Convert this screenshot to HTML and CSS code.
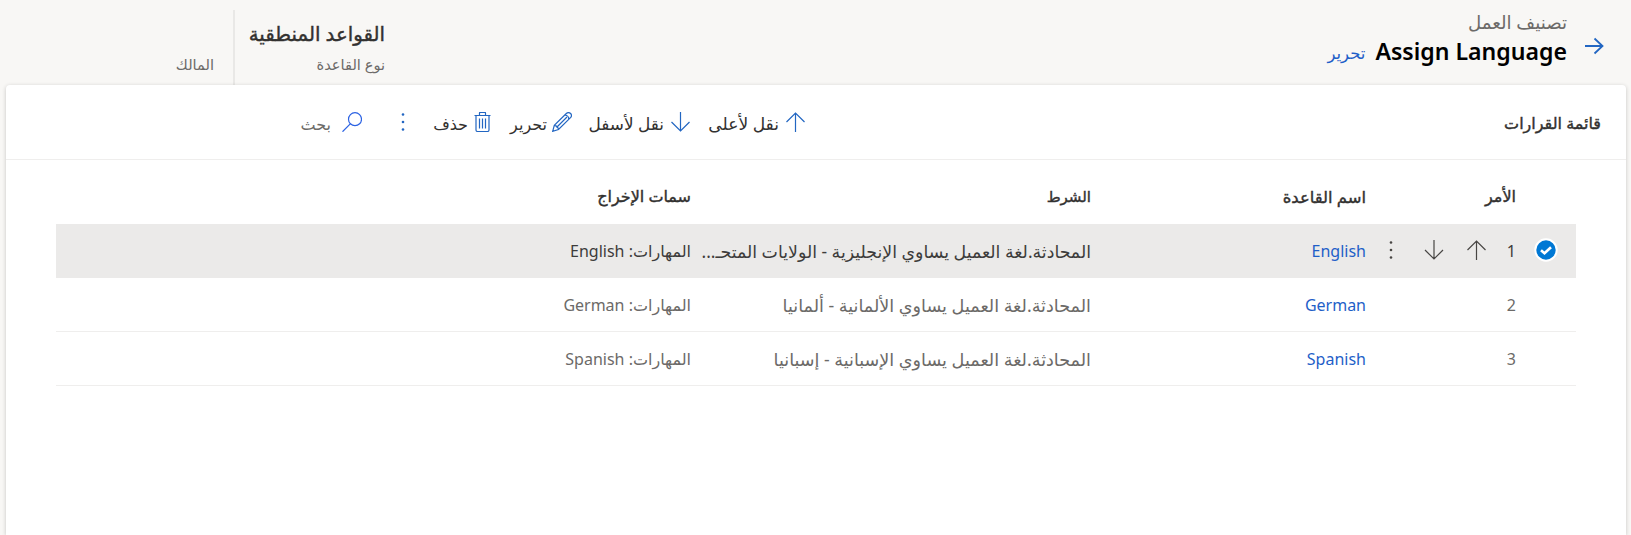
FILE: index.html
```
<!DOCTYPE html>
<html lang="ar" dir="rtl">
<head>
<meta charset="utf-8">
<title>Assign Language</title>
<link rel="stylesheet" href="styles.css">
</head>
<body>
<header class="top">
  <svg class="back" width="20" height="20" viewBox="0 0 20 20"><path d="M1 10H18.5M10.5 2.5L18.5 10L10.5 17.5"/></svg>
  <div class="heading">
    <div class="crumb">تصنيف العمل</div>
    <div class="title-row"><h1 class="title">Assign Language</h1><a class="edit">تحرير</a></div>
  </div>
  <div class="stats">
    <div class="stat rule"><span class="value">القواعد المنطقية</span><span class="label">نوع القاعدة</span></div>
    <div class="stat owner"><span class="value"></span><span class="label">المالك</span></div>
  </div>
</header>
<main class="card">
  <div class="toolbar">
    <h2 class="list-title">قائمة القرارات</h2>
    <div class="commands">
      <div class="cmd up"><svg width="20" height="20" viewBox="0 0 20 20"><path d="M10.5 20V1M1.5 10L10.5 1L19.5 10"/></svg><span>نقل لأعلى</span></div>
      <div class="cmd down"><svg width="20" height="20" viewBox="0 0 20 20"><path d="M10.5 0V19M1.5 10L10.5 19L19.5 10"/></svg><span>نقل لأسفل</span></div>
      <div class="cmd pen"><svg width="20" height="20" viewBox="0 0 20 20"><path d="M.7 19.3L2.3 13.3L14.3 1.5Q16.5-.3 18.6 1.5Q20.4 3.5 18.5 5.7L6.5 17.5ZM2.3 13.3Q6 14 6.5 17.5M13 3Q16.5 3.5 17 7M4.500 15.500L15 5"/></svg><span>تحرير</span></div>
      <div class="cmd bin"><svg width="17" height="20" viewBox="0 0 17 20"><path d="M.5 3.5H16.5M5.5 3.5V1Q5.5.5 6 .5H11Q11.5.5 11.5 1V3.5M2 3.5V18Q2 19.500 3.500 19.500H13.500Q15 19.500 15 18V3.500M5.500 6.500V16.500M8.500 6.500V16.500M11.500 6.500V16.500"/></svg><span>حذف</span></div>
      <svg class="dots" width="4" height="20" viewBox="0 0 4 20"><circle cx="2" cy="2.500" r="1.300"/><circle cx="2" cy="10" r="1.300"/><circle cx="2" cy="17.500" r="1.300"/></svg>
      <div class="cmd find"><svg width="20" height="20" viewBox="0 0 20 20"><circle cx="13" cy="7.200" r="6.500"/><path d="M8.500 11.700L.5 19.700"/></svg><span>بحث</span></div>
    </div>
  </div>
  <div class="table">
    <div class="row head">
      <div></div><div>الأمر</div><div class="name-head">اسم القاعدة</div><div class="cond-head">الشرط</div><div>سمات الإخراج</div>
    </div>
    <div class="row selected">
      <div class="check"><svg width="24" height="24" viewBox="0 0 24 24"><circle cx="12" cy="12" r="10.700"/><path d="M7 12.200L10.500 15.300L17 9.200"/></svg></div>
      <div class="order"><span>1</span>
        <svg class="move-up" width="20" height="20" viewBox="0 0 20 20"><path d="M10.500 20V1M1.500 10L10.500 1L19.500 10"/></svg>
        <svg class="move-down" width="20" height="20" viewBox="0 0 20 20"><path d="M10 0V19M1 10L10 19L19 10"/></svg>
        <svg class="dots" width="4" height="20" viewBox="0 0 4 20"><circle cx="2" cy="2.500" r="1.300"/><circle cx="2" cy="10" r="1.300"/><circle cx="2" cy="17.500" r="1.300"/></svg>
      </div>
      <a>English</a>
      <div class="cond">المحادثة.لغة العميل يساوي الإنجليزية - الولايات المتحـ...</div>
      <div>المهارات: English</div>
    </div>
    <div class="row">
      <div></div><div>2</div><a>German</a>
      <div class="cond">المحادثة.لغة العميل يساوي الألمانية - ألمانيا</div>
      <div>المهارات: German</div>
    </div>
    <div class="row">
      <div></div><div>3</div><a>Spanish</a>
      <div class="cond">المحادثة.لغة العميل يساوي الإسبانية - إسبانيا</div>
      <div>المهارات: Spanish</div>
    </div>
  </div>
</main>
</body>
</html>
```
FILE: styles.css
```
* { box-sizing: border-box; }
body {
  margin: 0;
  height: 535px;
  overflow: hidden;
  display: flex;
  flex-direction: column;
  background: #f8f7f5;
  color: #323130;
  font: 16px/24px "Noto Sans", "DejaVu Sans", sans-serif;
  white-space: nowrap;
}
svg { flex: none; display: block; fill: none; stroke: #2266c2; stroke-width: 1.2; }
a { color: #1f5fc8; }

.top { height: 85px; flex: none; display: flex; padding: 10px 27px 0 176px; }
.back { margin-top: 26px; stroke-width: 1.8; }
.heading { padding-right: 17px; }
.crumb { height: 25px; font-size: 18.2px; line-height: 25px; color: #6c6a68; }
.title-row { display: flex; align-items: center; gap: 10px; height: 32px; }
.title { margin: 0; font-size: 23.1px; line-height: 32px; font-weight: 600; color: #000; }
.edit { font-size: 16.5px; padding-top: 4px; }
.stats { display: flex; margin-right: auto; }
.stat { display: flex; flex-direction: column; padding-top: 10px; }
.value { height: 29px; font-size: 19.8px; line-height: 28px; -webkit-text-stroke: .4px currentColor; }
.label { font-size: 14.6px; line-height: 30px; color: #6c6a68; }
.rule { width: 152px; border-left: 2px solid #e9e8e6; }
.owner { padding-right: 19px; width: 57px; }

.card {
  flex: 1;
  margin: 0 5px 0 6px;
  background: #fff;
  border-radius: 4px 4px 0 0;
  box-shadow: 0 1px 4px rgba(0, 0, 0, .2);
}
.toolbar { height: 75px; display: flex; padding-right: 25px; border-bottom: 1px solid #efeeed; }
.list-title {
  width: 796px;
  margin: 0;
  font-size: 16px;
  font-weight: 400;
  line-height: 77px;
  -webkit-text-stroke: .4px currentColor;
}
.commands { display: flex; align-items: flex-start; padding-top: 27px; }
.cmd { display: flex; gap: 6px; }
.cmd span { line-height: 24px; }
.up { width: 115px; font-size: 17.1px; }
.down { width: 118px; font-size: 16.9px; }
.pen { width: 81px; gap: 5px; }
.bin { width: 86px; }
.dots { fill: #2266c2; stroke: none; }
.find { margin-right: 39px; gap: 11px; color: #6c6a68; }
.find svg { stroke: #2b62e3; }

.table { margin: 10px 50px 0; }
.row {
  display: grid;
  grid-template-columns: 60px 150px 275px 400px 1fr;
  height: 54px;
  line-height: 54px;
  border-bottom: 1px solid #efeeed;
  color: #6c6a68;
}
.head { border: 0; line-height: 53px; color: #323130; -webkit-text-stroke: .4px currentColor; }
.name-head { font-size: 16.4px; }
.cond-head { font-size: 15px; }
.selected { background: #ebeae9; border: 0; color: #3d3c3b; }
.selected .cond { font-size: 17.35px; }
.check { padding: 14px 18px; }
.check svg { stroke: #fff; fill: #0078d4; stroke-width: 2; }
.check path { fill: none; stroke-width: 2.6; }
.order { display: flex; }
.order svg { margin-top: 16px; stroke: #484644; }
.order .dots { fill: #484644; stroke: none; margin-right: 31px; }
.move-up { margin-right: 21px; }
.move-down { margin-right: 22px; }
.cond { font-size: 17.6px; }
```
